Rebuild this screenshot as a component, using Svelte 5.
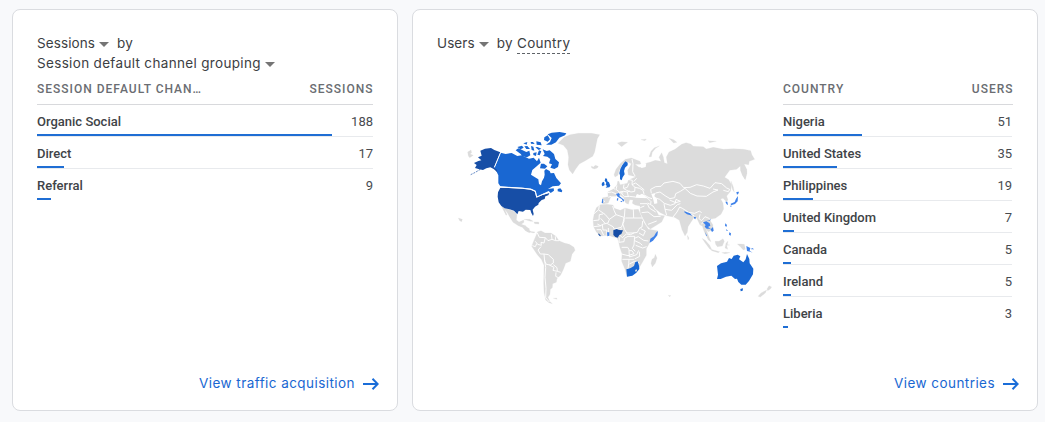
<script>
  const sessions = [
    { name: 'Organic Social', value: 188, width: 295 },
    { name: 'Direct', value: 17, width: 27 },
    { name: 'Referral', value: 9, width: 14 }
  ];
  const countries = [
    { name: 'Nigeria', value: 51, width: 79 },
    { name: 'United States', value: 35, width: 54 },
    { name: 'Philippines', value: 19, width: 29.5 },
    { name: 'United Kingdom', value: 7, width: 11 },
    { name: 'Canada', value: 5, width: 8 },
    { name: 'Ireland', value: 5, width: 8 },
    { name: 'Liberia', value: 3, width: 5 }
  ];
</script>

{#snippet caret()}
  <svg class="caret" width="10" height="5" viewBox="0 0 10 5"><path d="M0 0H10L5 5Z" fill="#757575" /></svg>
{/snippet}

{#snippet table(label, metric, rows)}
  <div class="table">
    <div class="head"><span>{label}</span><span>{metric}</span></div>
    {#each rows as row}
      <div class="row">
        <div class="cells"><span class="name">{row.name}</span><span class="value">{row.value}</span></div>
        <div class="bar" style="width: {row.width}px"></div>
      </div>
    {/each}
  </div>
{/snippet}

{#snippet link(text)}
  <div class="link">
    <span>{text}</span>
    <svg width="16" height="12" viewBox="0 0 16 12" fill="none" stroke="#1a6dd8" stroke-width="2"><path d="M0 6H14.5M9.5 .8L14.7 6L9.5 11.2" /></svg>
  </div>
{/snippet}

<main>
  <section class="card">
    <header>
      <div class="line"><span>Sessions</span>{@render caret()}<span class="by">by</span></div>
      <div class="line"><span class="long">Session default channel grouping</span>{@render caret()}</div>
    </header>
    {@render table('SESSION DEFAULT CHAN…', 'SESSIONS', sessions)}
    {@render link('View traffic acquisition')}
  </section>

  <section class="card wide">
    <header>
      <div class="line"><span>Users</span>{@render caret()}<span class="by">by</span><span class="dashed">Country</span></div>
    </header>
    <div class="content">
      <svg class="map" width="320" height="190" viewBox="0 0 960 570">
        <g class="land">
          <path d="M140 260L152 265 164 268 178 275 186 284 184 300 192 306 206 300 207 307 199 313 212 317 216 329 228 334 223 338 211 332 202 322 190 317 174 307 166 294 158 280 149 268 156 284 153 286Z" />
          <path d="M38 96L48 90 50 98 45 102 55 106 44 113 40 108Z M10 294L22 298 20 305 14 302Z M207 298L224 298 235 304 226 304Z M237 306L251 306 252 312 239 311Z" />
          <path d="M327 52L345 44 370 40 410 40 434 44 427 56 423 76 419 96 413 109 391 122 373 132 362 147 353 162 343 150 339 134 341 112 337 90 325 76 309 70Z" />
          <path d="M409 138L415 141 421 136 430 139 427 144 418 147 410 144Z M487 69L500 65 518 67 509 73 500 80Z M558 59L574 57 570 62Z M642 55L656 59 666 67 656 69Z M759 62L784 64 764 68Z" />
          <path d="M582 110L588 94 598 83 613 78 602 85 592 97 589 110Z" />
        </g>
        <!-- South America -->
        <g transform="translate(135 270)" class="land">
          <path d="M113 65L123 62 135 69 153 69 168 79 177 92 193 99 208 103 222 112 225 121 216 133 211 154 197 160 191 176 182 195 171 206 169 217 158 221 157 233 151 238 150 253 144 262 149 274 157 281 147 278 137 270 132 247 131 219 132 166 124 148 112 134 95 109 101 93Z" />
          <path d="M61 49L76 48 88 56 88 64 105 66 102 69 82 65 78 54Z M160 265L170 264 171 268Z" />
          <path class="borders" d="M112 69L118 82 136 83 132 99 123 97 124 106 113 103 106 94M136 83L144 92 156 88 154 73M166 79L167 92 177 92M156 88L167 92M97 107L106 110 110 101M123 110L114 120 121 132 132 132 145 134 160 148 160 159 151 165 139 163 134 154 132 132M134 150L137 172 135 202 138 235 137 263 148 276M148 165L162 172 159 181 172 184 171 173 160 164M168 187L167 199 181 206M172 184L182 187" />
        </g>
        <!-- Eurasia -->
        <g transform="translate(315 0)">
          <path class="land" d="M162 164L168 148 182 130 196 118 214 114 240 124 243 133 225 133 237 142 252 140 257 130 272 126 286 121 303 124 297 112 305 98 310 111 313 128 322 131 319 111 327 96 345 88 365 73 378 68 392 72 400 79 430 80 439 87 460 82 490 88 520 86 551 88 572 92 576 105 584 118 568 124 566 134 552 132 560 148 561 160 556 179 547 166 541 150 542 137 530 148 509 151 494 172 506 179 515 194 512 213 500 228 504 240 499 245 489 235 482 237 489 249 491 267 483 283 466 295 448 298 459 315 458 330 444 335 437 324 447 351 453 365 445 360 432 334 427 318 420 315 410 294 401 294 384 320 382 337 375 348 366 329 358 301 343 292 320 287 301 278 286 266 296 286 314 287 305 306 271 327 261 318 241 279 240 258 225 255 217 250 219 240 209 239 205 253 197 249 190 232 176 223 167 229 153 229 145 249 130 252 126 247 128 233 145 230 143 216 160 207 171 195 173 184 177 184 180 194 202 190 205 181 214 176 228 170 205 165 203 151 210 139 214 131 204 126 198 128 187 132 177 153 174 166 165 171Z" />
          <path fill="#fff" d="M225 233L231 222 239 225 246 221 252 225 264 235 244 234Z M274 222L287 219 283 228 291 238 292 250 283 252 280 239Z M199 157L200 178 188 190 184 188 191 175 193 163Z M241 133L259 130 257 141 245 144 237 139Z" />
          <path class="borders" d="M216 117L219 131 218 155 225 168M204 178L217 181 216 194 225 202 224 214 213 216 200 211 190 205 192 193M171 197L168 208 178 216 191 214 202 216 209 213M142 218L155 216 169 222 179 218 190 219M184 220L193 230 208 229 225 231M202 216L205 231M225 202L239 205 249 211 252 222M230 175L221 185M216 194L227 189 242 201 253 210M251 224L267 233 276 236M261 233L273 245 272 252M274 220L272 208 287 200 303 199 312 189 339 184 360 190 371 203 390 202 410 194 430 198 450 205 465 188 485 191 500 204 509 208 505 215 490 211M287 219L300 216 315 227 330 236 344 233 347 221 361 214 375 205M375 205L391 220 411 228 439 229 459 216 474 210 459 207M281 232L299 238 313 250 331 256 345 251 348 238 361 244 347 248 329 240M263 249L279 258 287 270M240 251L262 251 268 264 287 276M241 263L253 258M245 278L264 276 282 290 302 289M264 313L290 303M312 251L315 268 320 286M315 268L335 271 352 254 361 251M339 291L351 276 359 261 367 265 386 277 404 280 419 273 425 279M379 276L402 287 405 297M420 283L417 296 425 302 435 290 449 296M431 305L424 313M128 237L134 246M145 232L153 229M157 201L166 209M192 205L202 202 207 190" />
          <path class="land" d="M541 137L552 132 560 151 555 178 548 165Z M513 183L520 201 523 217 517 208Z M382 346L387 354 384 360Z" />
        </g>
        <!-- Africa, South Asia and Oceania -->
        <g transform="translate(390 210)">
          <path class="land" d="M34 53L46 44 65 43 84 45 88 55 106 61 120 54 141 59 160 58 166 72 176 96 190 118 218 122 214 138 194 158 184 176 184 196 174 214 162 234 150 250 126 260 120 238 110 214 111 191 104 170 100 152 96 143 84 141 70 136 46 138 34 126 26 110 24 90 28 70Z" />
          <path class="borders" d="M43 46L41 59 27 71M41 60L60 73 73 88 93 74 87 61 83 48M25 92L42 90 43 74 54 72M26 110L44 108 56 102 69 99 73 88M93 74L117 82 117 94 109 112 88 117 84 110 67 101M120 55L118 82M145 58L146 84 121 84M118 83L113 101 119 119 126 129 144 129 157 127 164 114 171 111 173 93M146 84L172 84M52 105L54 120 65 120 66 135M35 119L48 119 56 136M70 114L71 138M109 115L103 134 112 143 124 132 137 134 148 128M103 142L102 157 117 155 118 145 129 139 149 139 147 165 142 175 151 184M110 172L128 172 134 182 141 182 147 191 129 197 110 192M148 145L160 140 176 151 190 153M162 129L175 137 181 123 167 116M149 152L166 160 172 166M152 166L173 174 185 170M132 180L133 201 155 194 161 181M112 208L147 208M132 209L131 221 129 236M133 222L149 214 156 214 164 220M149 207L164 199 163 185M48 108L37 102M61 101L47 85" />
          <path class="land" d="M211 193L216 204 211 220 202 231 198 220 201 208 208 203Z M351 145L361 151 374 166 381 180 374 177 360 158Z M390 154L402 154 414 146 418 154 412 168 397 170 392 163Z M378 178L404 185 400 188 380 182Z M423 160L429 153 427 164 434 165 425 166 428 178 420 174Z M457 162L469 162 478 163 481 178 475 180 466 170Z M552 287L560 291 556 297 548 302 546 297Z M545 300L541 309 526 321 519 319 528 309Z M250 316L258 317 253 320Z M410 188L422 187 435 188 420 191Z" />
          <path fill="#1967d2" d="M396 228L408 220 426 215 432 204 440 207 446 197 458 194 466 199 462 208 475 217 482 208 486 192 493 207 494 220 505 236 504 253 492 273 482 284 469 284 460 276 456 266 450 267 439 257 423 260 407 267 396 267 399 254Z M466 297L474 295 473 302 467 304Z M124 238L131 236 137 234 147 228 151 216 158 214 162 227 163 237 154 248 142 257 126 260Z" />
          <path fill="#dcdcdc" d="M150 240L156 238 156 243 152 246Z" />
          <path fill="#174ea6" d="M85 121L95 117 102 120 114 121 109 132 103 135 98 143 91 141 85 135Z M41 130L48 138 45 139 40 134Z" />
          <path fill="#3f82ea" d="M66 127L73 127 73 137 67 139Z M219 123L217 136 204 152 194 158 196 146 207 139 213 128Z M298 64L315 70 322 77 306 73 298 67Z M327 80L333 82 331 88 327 85Z M354 97L364 94 374 100 376 107 369 111 378 117 384 111 386 122 381 126 376 116 365 116 359 110 362 105Z M364 92L373 91 378 87 375 92Z M361 126L366 138 363 137Z M421 100L426 105 424 111 420 107Z M433 127L438 130 437 137 432 134Z M423 117L429 122 425 123Z M484 168L496 174 494 182 503 188 496 185 486 183Z M501 174L508 178 498 178Z M421 35L427 35 429 45 425 43Z M454 6L462 5 460 11 456 14Z M459 18L458 34 450 42 438 46 437 41 449 36 453 26Z M435 47L440 47 438 52Z" />
        </g>
        <!-- European highlights -->
        <g transform="translate(315 0)" fill="#1967d2">
          <path d="M196 124L203 128 203 136 195 143 192 153 194 163 188 172 185 181 180 178 180 166 178 160 181 147 187 135Z M136 175L141 176 142 184 147 187 151 197 148 202 137 203 141 198 137 194 139 188 134 182Z M126 188L132 185 134 195 128 199 125 195Z" />
          <path fill="#3f82ea" d="M168 222L176 219 180 224 178 228 193 240 190 245 185 237 173 230Z M172 234L175 235 174 242 170 241Z M180 243L187 243 186 247Z M127 236L130 238 129 250 125 249Z" />
        </g>
        <!-- North America highlights -->
        <g fill="#1967d2">
          <path d="M137 98L152 102 170 99 187 108 200 106 222 116 236 113 246 124 252 113 257 128 246 138 232 150 228 164 240 172 250 178 252 192 258 196 261 184 267 173 269 164 268 152 273 147 284 153 287 160 297 159 304 174 318 190 312 197 293 199 279 207 296 205 297 212 287 219 281 213 262 222 246 230 242 212 228 206 202 203 136 199 130 190 130 166 122 149 119 142Z" />
          <path d="M308 207L316 205 322 212 320 217 308 214Z M182 91L190 85 203 91 214 96 223 92 226 106 216 112 202 109 197 102Z M187 81L201 77 206 83 197 88Z M205 70L217 66 215 74Z M208 79L217 78 225 87 214 87Z M228 78L235 80 238 92 230 90Z M227 66L234 66 239 72 228 71Z M241 82L247 81 259 86 251 90Z M244 64L257 67 260 76 245 74Z M235 99L245 97 243 108 235 105Z M252 91L259 94 254 106 247 104Z M263 88L275 93 284 91 297 102 301 117 312 127 309 141 298 147 286 143 291 133 282 130 286 117 277 110 264 108 269 102Z M258 131L267 131 277 139 270 146 255 145Z M268 52L278 46 285 58 278 65 267 60Z M278 43L290 38 314 36 334 40 330 46 313 53 303 67 289 74 273 74 285 66 290 54Z" />
          <path fill="#174ea6" d="M136 203L200 206 226 209 240 215 244 233 262 225 276 221 283 219 280 226 271 229 269 237 260 240 251 249 250 254 240 260 233 269 236 282 234 288 229 279 226 270 212 269 204 275 191 273 187 283 177 272 164 268 149 265 139 258 131 247 128 230 129 217Z M76 92L90 86 108 84 118 90 136 97 118 141 126 150 127 157 116 147 106 142 94 145 84 150 73 148 60 144 65 135 57 129 70 123 79 121 69 112 80 107Z" />
          <path fill="none" stroke="#174ea6" stroke-width="2" stroke-dasharray="6 3" d="M76 148L61 157 47 164" />
          <path fill="none" stroke="#fff" stroke-width="3" d="M137 97L118 142M135 201L202 204.500 228 207.500 241 214 245 231 263 223.500 281 217" />
        </g>
      </svg>
      {@render table('COUNTRY', 'USERS', countries)}
    </div>
    {@render link('View countries')}
  </section>
</main>

<style>
  :global(body) { background: #f8f9fb; }
  main {
    box-sizing: border-box;
    height: 422px;
    padding: 9px 7px 11px 12px;
    display: flex;
    gap: 14px;
    font-family: Roboto, sans-serif;
    color: #3c4043;
  }
  .card {
    box-sizing: border-box;
    width: 386px;
    height: 402px;
    padding: 23px 24px 15px;
    border: 1px solid #dadce0;
    border-radius: 8px;
    background: #fff;
    display: flex;
    flex-direction: column;
  }
  .wide { width: 626px; }
  header {
    height: 41px;
    font: 13.5px/20px Inter, sans-serif;
    letter-spacing: 0.3px;
  }
  .line { display: flex; align-items: center; height: 20px; white-space: nowrap; }
  .line > span:first-child { letter-spacing: 0.1px; }
  .line > .long:first-child { letter-spacing: 0.33px; }
  .caret { margin: 3px 8px 0 4px; }
  .dashed { margin-left: 4px; line-height: 19px; border-bottom: 1px dashed #5f6368; position: relative; top: 0.5px; }
  .table { width: 336px; }
  .head {
    box-sizing: border-box;
    height: 31px;
    padding-top: 7px;
    border-bottom: 1px solid #d8d9dc;
    display: flex;
    justify-content: space-between;
    font: 500 12px/16px Roboto, sans-serif;
    letter-spacing: 1px;
    color: #6a6d72;
  }
  .head span:last-child { margin-right: -0.5px; }
  .row {
    box-sizing: border-box;
    height: 32px;
    display: flex;
    flex-direction: column;
    border-bottom: 1px solid #e8eaed;
  }
  .row:last-child { border-color: transparent; }
  .cells { height: 29px; display: flex; justify-content: space-between; font-size: 13px; line-height: 33px; }
  .name { font-weight: 500; color: #404347; }
  .value { color: #484b50; }
  .bar { height: 2px; background: #1f6ed4; }
  .content { display: flex; }
  .map { margin: 46px 8px 0 18px; flex: none; }
  .content .table { width: 230px; flex: none; }
  .content .row { width: 229px; }
  .link {
    margin: auto -6px 0 0;
    height: 24px;
    display: flex;
    align-items: center;
    justify-content: flex-end;
    gap: 8px;
    font: 13.5px/24px Inter, sans-serif;
    letter-spacing: 0.44px;
    color: #1967d2;
  }
  .link span { margin-top: -1px; }
  .link svg { margin-top: 2px; }
  .land { fill: #dcdcdc; stroke: #dcdcdc; stroke-width: 0.6; }
  .borders { fill: none; stroke: #fff; stroke-width: 2.8; stroke-linejoin: round; }
</style>
